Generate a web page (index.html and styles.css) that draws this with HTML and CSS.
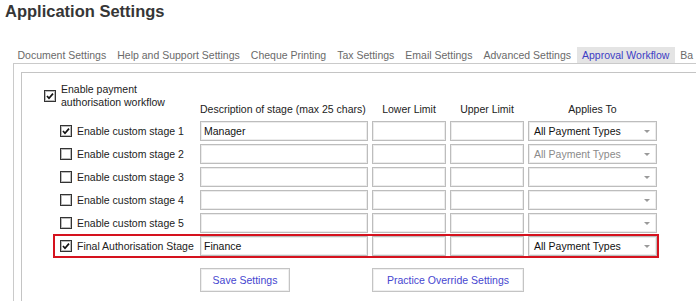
FILE: index.html
```html
<!DOCTYPE html>
<html lang="en">
<head>
  <meta charset="UTF-8" />
  <title>Application Settings</title>
  <link rel="stylesheet" href="styles.css">
</head>
<body>
  <h1 class="title">Application Settings</h1>

  <!-- Settings tabs -->
  <div class="tabs">
    <span class="tab">Document Settings</span>
    <span class="tab">Help and Support Settings</span>
    <span class="tab">Cheque Printing</span>
    <span class="tab">Tax Settings</span>
    <span class="tab">Email Settings</span>
    <span class="tab">Advanced Settings</span>
    <span class="tab active">Approval Workflow</span>
    <span class="tab">Ba</span>
  </div>

  <div class="panel">
    <div class="group">
      <div class="head">
        <label class="main-check">
          <svg class="cb" width="12" height="12" viewBox="0 0 12 12"><rect x="0.5" y="0.5" width="11" height="11" fill="#fff" stroke="#333"/><rect x="1.5" y="1.5" width="9" height="9" fill="none" stroke="#bbb"/><path d="M3 6 L5 8.3 L9 3.6" fill="none" stroke="#111" stroke-width="1.7"/></svg>
          <span>Enable payment<br>authorisation workflow</span>
        </label>
        <span class="col-desc">Description of stage (max 25 chars)</span>
        <span class="col-num">Lower Limit</span>
        <span class="col-num">Upper Limit</span>
        <span class="col-sel">Applies To</span>
      </div>

      <div class="rows">
        <div class="row">
          <label class="stage">
            <svg class="cb" width="12" height="12" viewBox="0 0 12 12"><rect x="0.5" y="0.5" width="11" height="11" fill="#fff" stroke="#333"/><rect x="1.5" y="1.5" width="9" height="9" fill="none" stroke="#bbb"/><path d="M3 6 L5 8.3 L9 3.6" fill="none" stroke="#111" stroke-width="1.7"/></svg>
            Enable custom stage 1
          </label>
          <div class="box desc">Manager</div>
          <div class="box num"></div>
          <div class="box num"></div>
          <div class="box sel">All Payment Types</div>
        </div>
        <div class="row">
          <label class="stage">
            <svg class="cb" width="12" height="12" viewBox="0 0 12 12"><rect x="0.5" y="0.5" width="11" height="11" fill="#fff" stroke="#333"/><rect x="1.5" y="1.5" width="9" height="9" fill="none" stroke="#bbb"/></svg>
            Enable custom stage 2
          </label>
          <div class="box desc"></div>
          <div class="box num"></div>
          <div class="box num"></div>
          <div class="box sel disabled">All Payment Types</div>
        </div>
        <div class="row">
          <label class="stage">
            <svg class="cb" width="12" height="12" viewBox="0 0 12 12"><rect x="0.5" y="0.5" width="11" height="11" fill="#fff" stroke="#333"/><rect x="1.5" y="1.5" width="9" height="9" fill="none" stroke="#bbb"/></svg>
            Enable custom stage 3
          </label>
          <div class="box desc"></div>
          <div class="box num"></div>
          <div class="box num"></div>
          <div class="box sel"></div>
        </div>
        <div class="row">
          <label class="stage">
            <svg class="cb" width="12" height="12" viewBox="0 0 12 12"><rect x="0.5" y="0.5" width="11" height="11" fill="#fff" stroke="#333"/><rect x="1.5" y="1.5" width="9" height="9" fill="none" stroke="#bbb"/></svg>
            Enable custom stage 4
          </label>
          <div class="box desc"></div>
          <div class="box num"></div>
          <div class="box num"></div>
          <div class="box sel"></div>
        </div>
        <div class="row">
          <label class="stage">
            <svg class="cb" width="12" height="12" viewBox="0 0 12 12"><rect x="0.5" y="0.5" width="11" height="11" fill="#fff" stroke="#333"/><rect x="1.5" y="1.5" width="9" height="9" fill="none" stroke="#bbb"/></svg>
            Enable custom stage 5
          </label>
          <div class="box desc"></div>
          <div class="box num"></div>
          <div class="box num"></div>
          <div class="box sel"></div>
        </div>
        <!-- Highlighted final stage -->
        <div class="row final">
          <label class="stage">
            <svg class="cb" width="12" height="12" viewBox="0 0 12 12"><rect x="0.5" y="0.5" width="11" height="11" fill="#fff" stroke="#333"/><rect x="1.5" y="1.5" width="9" height="9" fill="none" stroke="#bbb"/><path d="M3 6 L5 8.3 L9 3.6" fill="none" stroke="#111" stroke-width="1.7"/></svg>
            Final Authorisation Stage
          </label>
          <div class="box desc">Finance</div>
          <div class="box num"></div>
          <div class="box num"></div>
          <div class="box sel">All Payment Types</div>
        </div>
      </div>

      <div class="actions">
        <button class="btn save">Save Settings</button>
        <button class="btn override">Practice Override Settings</button>
      </div>
    </div>
  </div>
</body>
</html>
```

FILE: styles.css
```css
* {
  box-sizing: border-box;
  margin: 0;
  padding: 0;
}
body {
  width: 696px;
  height: 301px;
  overflow: hidden;
  background: #fff;
  font-family: 'Liberation Sans', Arial, sans-serif;
  font-size: 10.5px;
  color: #222;
}
.title {
  padding: 2px 0 0 5px;
  font-size: 16.5px;
  line-height: 19px;
  font-weight: bold;
  color: #363636;
}
/* Tabs */
.tabs {
  display: flex;
  margin-top: 26px;
  padding-left: 12px;
  height: 16px;
  line-height: 16px;
  white-space: nowrap;
  overflow: hidden;
}
.tab {
  padding: 0 5.5px;
  color: #6a6a6a;
}
.tab.active {
  background: #e4e4e4;
  color: #3d3dc4;
}
/* Panel and group box */
.panel {
  margin-left: 13px;
  height: 238px;
  border-left: 1px solid #cacaca;
  border-top: 1px solid #cacaca;
  padding: 8px 0 0 7px;
  overflow: hidden;
}
.group {
  height: 100%;
  border-top: 1px solid #c4c4c4;
  border-left: 1px solid #c4c4c4;
  padding: 10px 0 0 22px;
}
.head {
  display: flex;
  height: 35px;
  gap: 4px;
  white-space: nowrap;
}
.main-check {
  display: flex;
  align-items: center;
  gap: 5px;
  width: 152px;
  height: 26px;
  line-height: 13px;
}
.head .col-desc,
.head .col-num,
.head .col-sel {
  align-self: flex-end;
  margin-bottom: 2px;
  line-height: 13px;
}
.col-desc { width: 168px; }
.col-num { width: 74px; text-align: center; }
.col-sel { width: 129px; text-align: center; }
.cb {
  flex: none;
  display: block;
}
/* Stage rows */
.rows {
  display: flex;
  flex-direction: column;
  gap: 3px;
  margin-top: 3px;
}
.row {
  display: flex;
  gap: 4px;
  height: 20px;
  align-items: stretch;
  white-space: nowrap;
}
.stage {
  display: flex;
  align-items: center;
  gap: 5px;
  width: 152px;
  padding-left: 16px;
}
.box {
  border: 1px solid #bdbdbd;
  box-shadow: inset 0 0 0 1px #ececec;
  background: #fff;
  padding: 0 3px;
  line-height: 18px;
  color: #111;
}
.box.desc { width: 168px; }
.box.num { width: 74px; }
.box.sel {
  position: relative;
  width: 129px;
  padding-left: 5px;
}
.box.sel::after {
  content: "";
  position: absolute;
  right: 6px;
  top: 8px;
  border-left: 3px solid transparent;
  border-right: 3px solid transparent;
  border-top: 3px solid #9a9a9a;
}
.box.sel.disabled { color: #8a8a8a; }
.row.final {
  height: 24px;
  margin: -2px 0 0 9px;
  width: 606px;
  border: 2px solid #d5121e;
}
.row.final .stage {
  width: 141px;
  padding-left: 5px;
}
/* Buttons */
.actions {
  display: flex;
  margin: 10px 0 0 156px;
  gap: 82px;
}
.btn {
  height: 24px;
  border: 1px solid #c4c4c4;
  box-shadow: inset 0 0 0 1px #efefef;
  background: #fff;
  font-family: inherit;
  font-size: 10.5px;
  color: #4646d0;
}
.btn.save { width: 90px; }
.btn.override { width: 152px; }
```
